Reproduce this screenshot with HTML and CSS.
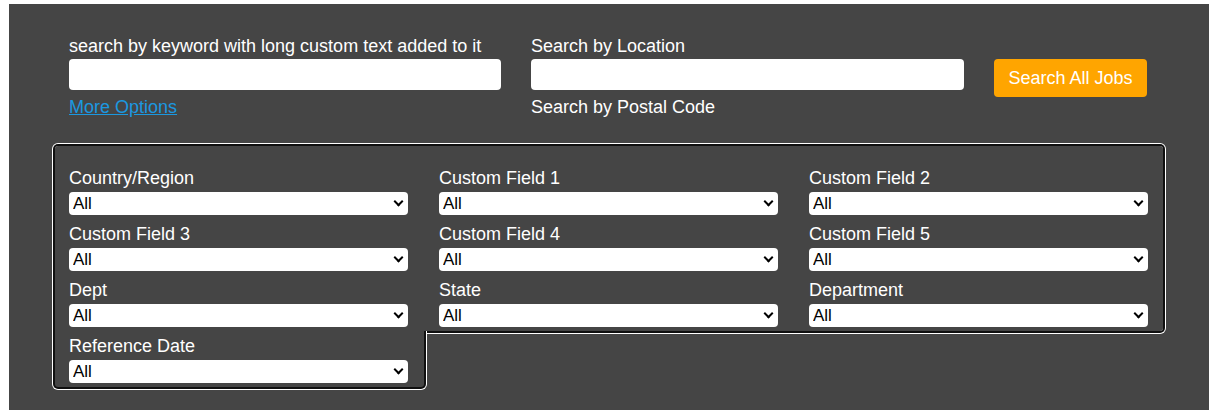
FILE: index.html
```html
<!DOCTYPE html>
<html lang="en">
<head>
  <meta charset="UTF-8">
  <meta name="viewport" content="width=device-width, initial-scale=1.0">
  <title>Job Search</title>
  <link rel="stylesheet" href="styles.css">
</head>
<body>

  <div class="search-box">

    <!-- Keyword / location / button -->
    <div class="search-row">
      <div class="search-col keyword-col">
        <label class="search-label" for="keyword">search by keyword with long custom text added to it</label>
        <input class="search-input" id="keyword" type="text">
        <a class="more-link" href="#">More Options</a>
      </div>
      <div class="search-col location-col">
        <label class="search-label" for="location">Search by Location</label>
        <input class="search-input" id="location" type="text">
        <div class="search-note">Search by Postal Code</div>
      </div>
      <div class="search-col button-col">
        <button class="search-btn" type="button">Search All Jobs</button>
      </div>
    </div>

    <!-- More options panel -->
    <div class="filter-panel">
      <div class="filter-grid">
        <div class="filter-item">
          <label class="filter-label">Country/Region</label>
          <span class="select-wrap"><select class="filter-select"><option>All</option></select></span>
        </div>
        <div class="filter-item">
          <label class="filter-label">Custom Field 1</label>
          <span class="select-wrap"><select class="filter-select"><option>All</option></select></span>
        </div>
        <div class="filter-item">
          <label class="filter-label">Custom Field 2</label>
          <span class="select-wrap"><select class="filter-select"><option>All</option></select></span>
        </div>
        <div class="filter-item">
          <label class="filter-label">Custom Field 3</label>
          <span class="select-wrap"><select class="filter-select"><option>All</option></select></span>
        </div>
        <div class="filter-item">
          <label class="filter-label">Custom Field 4</label>
          <span class="select-wrap"><select class="filter-select"><option>All</option></select></span>
        </div>
        <div class="filter-item">
          <label class="filter-label">Custom Field 5</label>
          <span class="select-wrap"><select class="filter-select"><option>All</option></select></span>
        </div>
        <div class="filter-item">
          <label class="filter-label">Dept</label>
          <span class="select-wrap"><select class="filter-select"><option>All</option></select></span>
        </div>
        <div class="filter-item">
          <label class="filter-label">State</label>
          <span class="select-wrap"><select class="filter-select"><option>All</option></select></span>
        </div>
        <div class="filter-item">
          <label class="filter-label">Department</label>
          <span class="select-wrap"><select class="filter-select"><option>All</option></select></span>
        </div>
      </div>
      <div class="filter-last">
        <div class="filter-item">
          <label class="filter-label">Reference Date</label>
          <span class="select-wrap"><select class="filter-select"><option>All</option></select></span>
        </div>
      </div>
    </div>

  </div>

</body>
</html>
```

FILE: styles.css
```css
/* General Body Styles */
body {
  margin: 0;
  background: #ffffff;
  font-family: "Liberation Sans", Arial, sans-serif;
  font-size: 18px;
  line-height: 21px;
  color: #ffffff;
}

/* Dark search box */
.search-box {
  width: 1200px;
  margin: 4px 0 0 9px;
  padding: 32px 46px 32px;
  box-sizing: border-box;
  background: #454545;
}

/* Top row */
.search-row {
  display: flex;
  align-items: flex-start;
  gap: 30px;
  margin-left: 14px;
}

.search-col {
  display: flex;
  flex-direction: column;
}

.keyword-col {
  width: 432px;
}

.location-col {
  width: 433px;
}

.button-col {
  padding-top: 23px;
}

.search-label {
  display: block;
}

.search-input {
  height: 31px;
  margin-top: 2px;
  padding: 0 8px;
  border: none;
  border-radius: 4px;
  background: #ffffff;
  font-family: inherit;
  font-size: 16px;
  box-sizing: border-box;
}

.more-link,
.search-note {
  margin-top: 7px;
}

.more-link {
  align-self: flex-start;
  color: #1b98e0;
  text-decoration: underline;
}

.search-btn {
  width: 153px;
  height: 38px;
  padding: 0;
  border: none;
  border-radius: 4px;
  background: #ffa500;
  color: #ffffff;
  font-family: inherit;
  font-size: 18px;
  cursor: pointer;
}

/* Filter panel (focus ring look) */
.filter-panel {
  margin-top: 28px;
}

.filter-grid {
  display: grid;
  grid-template-columns: repeat(3, 339px);
  column-gap: 31px;
  row-gap: 8px;
  padding: 21px 15px 4px 14px;
  border-radius: 3px 3px 3px 0;
  box-shadow: 0 0 0 2px #101010, 0 0 0 3px #ffffff;
}

.filter-last {
  width: 369px;
  padding: 4px 0 4px 14px;
  box-sizing: border-box;
  background: #454545;
  border-radius: 0 0 3px 3px;
  box-shadow: 0 0 0 2px #101010, 0 0 0 3px #ffffff;
  clip-path: inset(0 -3px -3px -3px);
}

.filter-last .select-wrap {
  width: 339px;
}

.filter-label {
  display: block;
  padding-top: 1px;
}

.select-wrap {
  display: block;
  position: relative;
  margin-top: 3px;
  height: 23px;
}

/* chevron */
.select-wrap::after {
  content: "";
  position: absolute;
  top: 6px;
  right: 6px;
  width: 5px;
  height: 5px;
  border-right: 2px solid #000000;
  border-bottom: 2px solid #000000;
  transform: rotate(45deg);
  pointer-events: none;
}

.filter-select {
  appearance: none;
  width: 100%;
  height: 23px;
  margin: 0;
  padding: 0 20px 0 4px;
  border: none;
  border-radius: 4px;
  background: #ffffff;
  color: #000000;
  font-family: "Liberation Sans", Arial, sans-serif;
  font-size: 17px;
}
```
